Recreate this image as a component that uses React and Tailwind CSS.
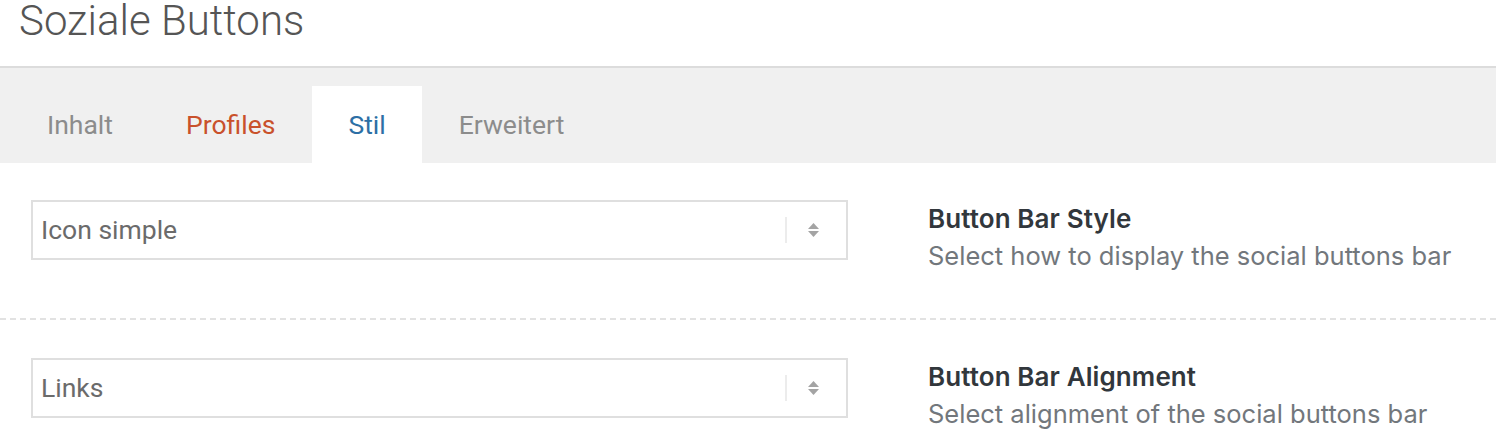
import React from 'react';

const tabs = [
  { label: 'Inhalt', color: 'text-[#8c8c8c]' },
  { label: 'Profiles', color: 'text-[#c9512b]' },
  { label: 'Stil', color: 'text-[#2d6fa5]', active: true },
  { label: 'Erweitert', color: 'text-[#8c8c8c]' },
];

const fields = [
  { value: 'Icon simple', title: 'Button Bar Style', desc: 'Select how to display the social buttons bar' },
  { value: 'Links', title: 'Button Bar Alignment', desc: 'Select alignment of the social buttons bar' },
];

const SelectBox = ({ value }) => (
  <div className="w-[817px] h-[60px] shrink-0 border-2 border-[#dfdfdf] bg-white flex items-center">
    <span className="flex-1 pl-[8px] text-[26.5px] text-[#6b6b6b]">{value}</span>
    <span className="w-[2px] h-[26px] bg-[#ececec]" />
    <span className="w-[59px] pr-[7px] flex flex-col items-center justify-center gap-[2px]">
      <svg width="11" height="6" viewBox="0 0 11 6"><path d="M5.5 0L11 6H0z" fill="#a4a4a4" /></svg>
      <svg width="11" height="6" viewBox="0 0 11 6"><path d="M0 0h11L5.5 6z" fill="#a4a4a4" /></svg>
    </span>
  </div>
);

export default function App() {
  return (
    <div className="w-[1496px] h-[430px] overflow-hidden bg-white font-['Roboto',sans-serif]">
      {/* Header */}
      <div className="h-[66px] pl-[19px]">
        <h1 className="text-[42px] font-light leading-[42px] text-[#555]">Soziale Buttons</h1>
      </div>

      {/* Tabs */}
      <div className="border-t-2 border-[#dcdcdc] bg-[#f0f0f0] pt-[18px] pl-[11px] flex gap-[1px]">
        {tabs.map((t) => (
          <div
            key={t.label}
            className={`h-[77px] px-[36px] flex items-center text-[26.5px] ${t.color} ${t.active ? 'bg-white' : ''}`}
          >
            {t.label}
          </div>
        ))}
      </div>

      {/* Fields */}
      {fields.map((f, i) => (
        <div
          key={f.title}
          className={`flex items-start pl-[31px] ${i === 0 ? 'h-[157px] pt-[37px] border-b-2 border-dashed border-[#e2e2e2]' : 'pt-[38px]'}`}
        >
          <SelectBox value={f.value} />
          <div className="ml-[80px] pt-[2px] font-['Inter',sans-serif]">
            <div className="text-[26px] font-semibold leading-[34px] text-[#32373c] tracking-[0.1px]">{f.title}</div>
            <div className="text-[25.5px] leading-[40px] text-[#72777c]">{f.desc}</div>
          </div>
        </div>
      ))}
    </div>
  );
}
